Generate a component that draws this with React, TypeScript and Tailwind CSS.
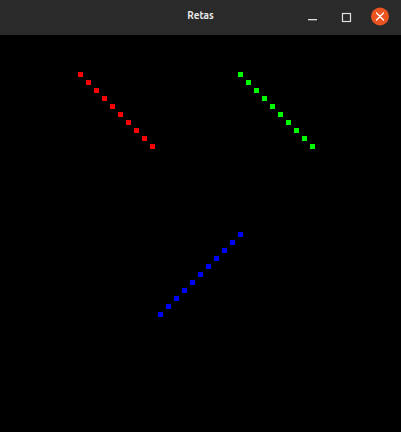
import React from "react";

const red = Array.from({ length: 10 }, (_, i) => ({ x: 78 + i * 8, y: 37 + i * 8 }));
const green = Array.from({ length: 10 }, (_, i) => ({ x: 238 + i * 8, y: 37 + i * 8 }));
const blue = Array.from({ length: 11 }, (_, i) => ({ x: 158 + i * 8, y: 277 - i * 8 }));

export default function App() {
  return (
    <div className="w-[401px] h-[432px] flex flex-col bg-black overflow-hidden" style={{ fontFamily: "Ubuntu, 'Noto Sans', 'DejaVu Sans', sans-serif" }}>
      <div className="h-[35px] shrink-0 bg-[#2b2a2a] relative flex items-center justify-center">
        <span className="text-[10px] font-bold text-[#e6e6e6] leading-none mt-[-3px]">Retas</span>
        <div className="absolute right-[5px] top-0 h-[35px] flex items-center">
          <svg width="92" height="35" viewBox="0 0 92 35">
            <rect x="4" y="19" width="9" height="1.3" fill="#e0e0e0" />
            <rect x="38.5" y="13.5" width="8" height="8" fill="none" stroke="#e0e0e0" strokeWidth="1.2" />
            <circle cx="76" cy="16.5" r="9" fill="#e95420" />
            <path d="M72.5 13 L79.5 20 M79.5 13 L72.5 20" stroke="#ffffff" strokeWidth="1.3" strokeLinecap="round" />
          </svg>
        </div>
      </div>
      <div className="flex-1">
        <svg width="401" height="397" viewBox="0 0 401 397">
          {red.map((p, i) => (
            <rect key={"r" + i} x={p.x} y={p.y} width="5" height="5" fill="#ff0000" />
          ))}
          {green.map((p, i) => (
            <rect key={"g" + i} x={p.x} y={p.y} width="5" height="5" fill="#00ff00" />
          ))}
          {blue.map((p, i) => (
            <rect key={"b" + i} x={p.x} y={p.y} width="5" height="5" fill="#0000ff" />
          ))}
        </svg>
      </div>
    </div>
  );
}
